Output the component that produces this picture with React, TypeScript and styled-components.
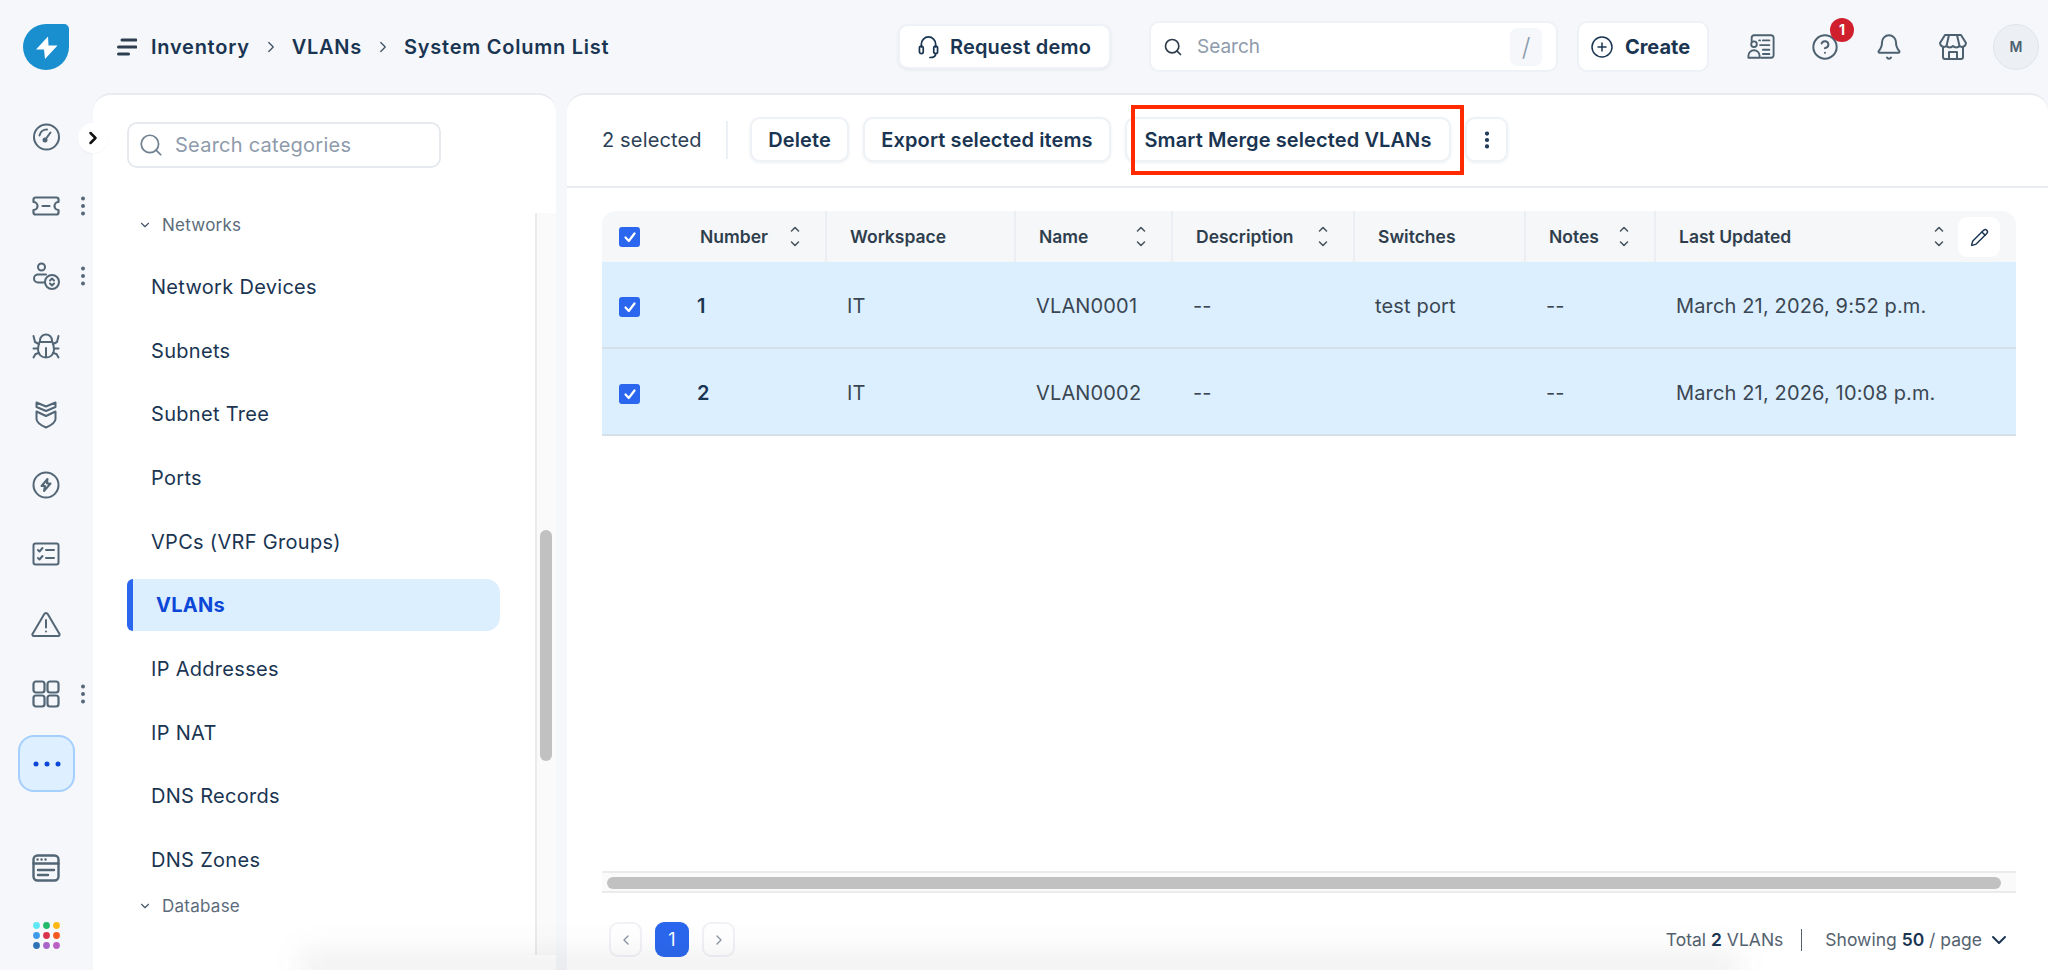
import React from "react";
import styled, { createGlobalStyle } from "styled-components";
import { ChevronDown, ChevronLeft, ChevronRight, CirclePlus, Pencil, Search, Bell, CircleHelp, EllipsisVertical } from "lucide-react";

const Global = createGlobalStyle`
  html, body { margin: 0; padding: 0; height: 100%; background: #f5f7fa; }
  body { font-family: Inter, "Liberation Sans", sans-serif; color: #1a3552; overflow: hidden; }
  * { box-sizing: border-box; }
`;

const Page = styled.div`
  position: relative; width: 2048px; height: 970px; display: flex; flex-direction: column; overflow: hidden; background: #f5f7fa;
`;
const TopBar = styled.header`
  height: 93px; flex: none; display: flex; align-items: center; padding: 0 9px 0 23px;
`;
const Logo = styled.svg` width: 46px; height: 46px; flex: none; `;
const MenuIcon = styled.svg` width: 20px; height: 18px; margin-left: 48px; flex: none; `;
const Crumbs = styled.nav`
  display: flex; align-items: center; margin-left: 14px; font-size: 20px; font-weight: 600; letter-spacing: 0.75px; color: #1a3552;
  svg { margin: 0 12px; color: #3b4d60; }
`;
const TopRight = styled.div` margin-left: auto; display: flex; align-items: center; `;
const DemoButton = styled.button`
  width: 213px; height: 45px; border: 2px solid #eef1f5; border-radius: 10px; background: #fff; display: flex; align-items: center; justify-content: center; gap: 11px;
  font: 600 20px Inter, sans-serif; color: #1a3552; box-shadow: 0 1px 3px rgba(30,50,80,.08); letter-spacing: .2px;
`;
const SearchBox = styled.div`
  width: 409px; height: 51px; margin-left: 38px; border: 2px solid #eef1f5; border-radius: 10px; background: #fff; display: flex; align-items: center; padding: 0 14px 0 12px;
  font-size: 19px; color: #8e9bab; gap: 14px;
`;
const Slash = styled.span`
  margin-left: auto; width: 32px; height: 38px; border-radius: 7px; background: #f5f7fa; display: flex; align-items: center; justify-content: center; color: #8a9aac; font-size: 25px; font-weight: 300;
`;
const CreateButton = styled.button`
  width: 132px; height: 51px; margin-left: 19px; border: 2px solid #eef1f5; border-radius: 10px; background: #fff; display: flex; align-items: center; justify-content: center; gap: 11px; padding: 0 6px 0 0;
  font: 700 20px Inter, sans-serif; color: #1a3552;
`;
const TopIcons = styled.div` display: flex; align-items: center; gap: 36px; margin-left: 38px; `;
const TopIcon = styled.div` position: relative; width: 28px; height: 28px; display: flex; align-items: center; justify-content: center; color: #4c6070; `;
const Badge = styled.span`
  position: absolute; top: -15px; right: -15px; width: 24px; height: 24px; border-radius: 50%; background: #d0202e; color: #fff; font-size: 14px; font-weight: 700; display: flex; align-items: center; justify-content: center;
`;
const Avatar = styled.div`
  width: 46px; height: 46px; margin-left: 26px; border-radius: 50%; background: #eceff3; border: 1px solid #e1e5ea; color: #4c6070; font-size: 14px; font-weight: 600; display: flex; align-items: center; justify-content: center;
`;

const Body = styled.div` position: relative; flex: 1; display: flex; min-height: 0; `;
const Rail = styled.aside` width: 93px; flex: none; display: flex; flex-direction: column; padding-top: 9px; `;
const RailItem = styled.div`
  height: 69.6px; flex: none; display: flex; align-items: center; padding-left: 30px; color: #536676;
`;
const RailGlyph = styled.div` width: 32px; height: 32px; display: flex; align-items: center; justify-content: center; `;
const Kebab = styled.svg` width: 4px; height: 20px; margin-left: 19px; `;
const MoreTile = styled.div`
  width: 57px; height: 57px; margin: 7px 0 0 18px; border: 2px solid #a5cfff; border-radius: 16px; background: #deefff; display: flex; align-items: center; justify-content: center; flex: none;
`;
const RailBottom = styled(RailItem)` height: 32px; `;
const RailSpacer = styled.div` height: 60px; flex: none; `;
const RailGap = styled.div` height: 35px; flex: none; `;
const ExpandButton = styled.button`
  position: absolute; left: 78px; top: 30px; width: 30px; height: 30px; border-radius: 50%; border: 0; padding: 0; background: #fff; color: #111; display: flex; align-items: center; justify-content: center; box-shadow: 0 1px 2px rgba(0,0,0,.04);
`;

const CategoryPanel = styled.section`
  width: 463px; flex: none; background: #fff; border-top: 2px solid #e8ebf0; border-top-left-radius: 18px; border-top-right-radius: 18px; display: flex; flex-direction: column;
`;
const CatHead = styled.div` height: 118px; flex: none; padding: 27px 0 0 34px; `;
const CatSearch = styled.div`
  width: 314px; height: 46px; border: 2px solid #e6eaef; border-radius: 10px; display: flex; align-items: center; gap: 11px; padding-left: 9px; color: #8e9bab; font-size: 20px; letter-spacing: .25px;
  svg { color: #6e7f90; }
`;
const CatBody = styled.div` height: 742px; display: flex; `;
const CatList = styled.div` width: 442px; flex: none; padding: 0 35px 0 34px; overflow: hidden; display: flex; flex-direction: column; gap: 11.7px; `;
const CatTrack = styled.div` width: 21px; border-left: 2px solid #ebebeb; background: #fafafa; position: relative; `;
const CatThumb = styled.div` position: absolute; left: 3px; top: 317px; width: 12px; height: 231px; border-radius: 6px; background: #c1c1c1; `;
const SectionRow = styled.div<{ $before?: number; $after?: number }>`
  height: 24px; flex: none; margin-top: ${p => p.$before ?? 0}px; margin-bottom: ${p => p.$after ?? 0}px; display: flex; align-items: center; gap: 10px; padding-left: 11px; font-size: 17px; letter-spacing: .25px; color: #5b6b7b;
  svg { color: #44566a; }
`;
const CatItem = styled.div<{ $active?: boolean }>`
  height: 52px; flex: none; display: flex; align-items: center; font-size: 20px; letter-spacing: .3px;
  font-weight: ${p => (p.$active ? 700 : 400)};
  padding-left: ${p => (p.$active ? 23 : 24)}px;
  color: ${p => (p.$active ? "#0d47d8" : "#1a3552")};
  ${p => p.$active && "background:#dcefff;border-left:6px solid #2a67ee;border-radius:6px 14px 14px 6px;"}
`;

const MainPanel = styled.main`
  flex: 1; margin-left: 11px; background: #fff; border-top: 2px solid #e8ebf0; border-top-left-radius: 18px; border-top-right-radius: 18px; display: flex; flex-direction: column; min-width: 0;
`;
const ActionBar = styled.div`
  height: 93px; flex: none; border-bottom: 2px solid #e9edf2; display: flex; align-items: center; padding: 0 0 2px 35px;
`;
const Selected = styled.span` font-size: 20px; letter-spacing: .15px; color: #2c4056; width: 124px; `;
const BarDivider = styled.span` width: 2px; height: 38px; background: #eceff3; margin-right: 22px; `;
const ActionButton = styled.button<{ $w: number }>`
  width: ${p => p.$w}px; height: 45px; margin-right: 14px; flex: none; border: 2px solid #eef1f5; border-radius: 10px; background: #fff; color: #1a3552; font: 600 20px Inter, sans-serif; letter-spacing: .1px; box-shadow: 0 1px 3px rgba(30,50,80,.08); padding: 0; display: flex; align-items: center; justify-content: center;
`;
const Highlighted = styled.div` position: relative; flex: none; `;
const RedBox = styled.div`
  position: absolute; left: 6px; right: 1px; top: -12px; bottom: -13px; border: 4px solid #ff2a00; pointer-events: none;
`;
const TableWrap = styled.div` flex: 1; padding: 23px 32px 0 35px; min-height: 0; `;
const columns = "74px 150px 189px 157px 182px 171px 130px 361px";
const HeadRow = styled.div`
  position: relative; display: grid; grid-template-columns: ${columns}; height: 51px; background: #f5f7f9; border-radius: 14px 14px 0 0;
`;
const HeadCell = styled.div<{ $last?: boolean; $plain?: boolean }>`
  display: flex; align-items: center; padding: 0 ${p => (p.$last ? 72 : 26)}px 0 ${p => (p.$plain ? 25 : 23)}px; font-size: 17.5px; font-weight: 600; color: #2f3e4d; margin-left: -1px;
  border-left: ${p => (p.$plain ? "0" : "2px solid #ebeef2")};
`;
const CheckCell = styled.div` display: flex; align-items: center; padding-left: 17px; `;
const RowCheckCell = styled(CheckCell)` padding-top: 3px; `;
const Check = styled.span`
  width: 21px; height: 20px; border-radius: 3px; background: #2a67ee; display: flex; align-items: center; justify-content: center; color: #fff;
`;
const SortGlyph = styled.svg` width: 10px; height: 21px; margin-left: auto; color: #44525f; flex: none; `;
const EditButton = styled.button`
  position: absolute; left: 1356px; top: 6px; width: 42px; height: 40px; border: 0; padding: 0; border-radius: 9px; background: #fff; color: #1a3552; display: flex; align-items: center; justify-content: center;
`;
const Row = styled.div`
  display: grid; grid-template-columns: ${columns}; height: 87px; background: #dcefff; border-bottom: 2px solid #d6e0e9; padding-top: 2px;
`;
const Cell = styled.div<{ $strong?: boolean }>`
  display: flex; align-items: center; padding-left: 21px; font-size: 20px; letter-spacing: .15px; color: ${p => (p.$strong ? "#1a3552" : "#3a4652")};
  font-weight: ${p => (p.$strong ? 600 : 400)};
`;
const HScroll = styled.div`
  height: 22px; flex: none; margin: 0 32px 0 35px; border-top: 2px solid #ebebeb; border-bottom: 2px solid #ebebeb; background: #fafafa; padding: 4px 15px 0 5px;
`;
const HThumb = styled.div` height: 12px; border-radius: 6px; background: #c1c1c1; `;
const Footer = styled.div`
  height: 77px; flex: none; padding: 29px 37px 0 42px; display: flex; align-items: flex-start;
`;
const PageBtn = styled.div<{ $on?: boolean }>`
  width: ${p => (p.$on ? 34 : 33)}px; height: 35px; margin-right: 13px; border-radius: 9px; border: ${p => (p.$on ? "0" : "2px solid #f0f2f5")}; background: ${p => (p.$on ? "#2a67ee" : "#fff")}; color: ${p => (p.$on ? "#fff" : "#8a96a3")}; font-size: 18px; display: flex; align-items: center; justify-content: center;
`;
const Summary = styled.div`
  margin-left: auto; height: 35px; display: flex; align-items: center; font-size: 17.5px; color: #54626f;
  b { color: #1a3552; font-weight: 600; }
`;
const SumDivider = styled.span` width: 1px; height: 22px; background: #55626f; margin: 0 23px 0 18px; `;
const SumChevron = styled.span` display: flex; margin-left: 5px; color: #1a3552; `;
const BottomGlow = styled.div`
  position: absolute; left: 300px; width: 1440px; bottom: -14px; height: 34px; background: rgba(60,60,60,.07); filter: blur(14px); pointer-events: none;
`;

const Ico: React.FC<{ w: number; h: number; vw?: number; vh?: number; sw?: number; children: React.ReactNode }> = ({ w, h, vw, vh, sw = 2, children }) => (
  <svg width={w} height={h} viewBox={`0 0 ${vw ?? w} ${vh ?? h}`} fill="none" stroke="currentColor" strokeWidth={sw} strokeLinecap="round" strokeLinejoin="round">{children}</svg>
);

const KebabDots = () => (
  <Kebab viewBox="0 0 4 20"><g fill="#55687a"><circle cx="2" cy="2.5" r="2" /><circle cx="2" cy="10" r="2" /><circle cx="2" cy="17.5" r="2" /></g></Kebab>
);
const Sort = () => (
  <SortGlyph viewBox="0 0 10 21" fill="none" stroke="currentColor" strokeWidth="1.5" strokeLinecap="round" strokeLinejoin="round">
    <path d="M1.5 5 5 1.5 8.5 5" /><path d="M1.5 16 5 19.5 8.5 16" />
  </SortGlyph>
);
const Tick = () => (
  <svg width="14" height="14" viewBox="0 0 14 14" fill="none" stroke="currentColor" strokeWidth="2.2" strokeLinecap="round" strokeLinejoin="round"><path d="M2.5 7.5 5.8 11 11.5 3.5" /></svg>
);

const colors = ["#5ee8f5", "#23b96b", "#fdb813", "#3d9be9", "#d9324a", "#f4581f", "#2d73b5", "#a765c9", "#bb61c6"];
const cats = ["Network Devices", "Subnets", "Subnet Tree", "Ports", "VPCs (VRF Groups)", "VLANs", "IP Addresses", "IP NAT", "DNS Records", "DNS Zones"];
const rows = [
  ["1", "IT", "VLAN0001", "--", "test port", "--", "March 21, 2026, 9:52 p.m."],
  ["2", "IT", "VLAN0002", "--", "", "--", "March 21, 2026, 10:08 p.m."],
];

export default function App() {
  return (
    <Page>
      <Global />
      <TopBar>
        <Logo viewBox="0 0 46 46">
          <path d="M25 0H41a5 5 0 0 1 5 5V23A23 23 0 1 1 23 0z" fill="#1a8fd0" />
          <path d="M25 12.500 13 25.500H21L22 35 34.500 21.500H25.500z" fill="#fff" />
        </Logo>
        <MenuIcon viewBox="0 0 20 18" fill="none" stroke="#2c3e50" strokeWidth="3" strokeLinecap="round">
          <path d="M5 2h14M1.500 9h17.500M1.500 16h10" />
        </MenuIcon>
        <Crumbs>
          <span>Inventory</span>
          <ChevronRight size={18} strokeWidth={1.6} />
          <span>VLANs</span>
          <ChevronRight size={18} strokeWidth={1.6} />
          <span>System Column List</span>
        </Crumbs>
        <TopRight>
          <DemoButton>
            <Ico w={21} h={26} vw={22} vh={26} sw={1.8}>
              <path d="M3.500 13V10a7.500 7.500 0 0 1 15 0v3" /><rect x="1.500" y="12" width="4" height="8" rx="2" /><rect x="16.500" y="12" width="4" height="8" rx="2" /><path d="M18.500 20c0 2.500-2.500 4-6 4" />
            </Ico>
            Request demo
          </DemoButton>
          <SearchBox>
            <Search size={20} color="#2f3e4d" strokeWidth={2} />
            Search
            <Slash>/</Slash>
          </SearchBox>
          <CreateButton>
            <CirclePlus size={24} strokeWidth={1.5} />
            Create
          </CreateButton>
          <TopIcons>
            <TopIcon>
              <Ico w={30} h={27} sw={2}>
                <path d="M5 8V4a2.500 2.500 0 0 1 2.500-2.500H26A2.500 2.500 0 0 1 28.500 4V23a2.500 2.500 0 0 1-2.500 2.500H15" />
                <circle cx="7.500" cy="11" r="3" /><path d="M1.500 25.500v-2a6 6 0 0 1 12 0v2z" />
                <path d="M13 7h1M17 7h7M14 12h10M17 17h7M17 21.500h7" />
              </Ico>
            </TopIcon>
            <TopIcon>
              <CircleHelp size={30} strokeWidth={1.7} />
              <Badge>1</Badge>
            </TopIcon>
            <TopIcon><Bell size={28} strokeWidth={1.7} /></TopIcon>
            <TopIcon>
              <Ico w={28} h={27} sw={2}>
                <path d="M6 2h16l5 8a4 4 0 0 1-6.500 3 4.500 4.500 0 0 1-6.500 0 4.500 4.500 0 0 1-6.500 0A4 4 0 0 1 1 10z" />
                <path d="M10 2 7.500 13M18 2l2.500 11" /><path d="M4 14v10a2 2 0 0 0 2 2h16a2 2 0 0 0 2-2V14" /><path d="M10 26v-7h8v7" />
              </Ico>
            </TopIcon>
          </TopIcons>
          <Avatar>M</Avatar>
        </TopRight>
      </TopBar>

      <Body>
        <Rail>
          <RailItem><RailGlyph>
            <Ico w={27} h={28} sw={2}>
              <circle cx="13.500" cy="14" r="12.500" /><path d="M6.500 12.500A7.500 7.500 0 0 1 14 6.500" /><path d="M12 17 17.500 9.500" /><circle cx="12" cy="17" r="1.500" fill="currentColor" />
            </Ico>
          </RailGlyph></RailItem>
          <RailItem><RailGlyph>
            <Ico w={28} h={20} sw={2.2}>
              <path d="M3.500 1.500h21a2 2 0 0 1 2 2V6a4 4 0 0 0 0 8v2.500a2 2 0 0 1-2 2h-21a2 2 0 0 1-2-2V14a4 4 0 0 0 0-8V3.500a2 2 0 0 1 2-2z" /><path d="M10.500 10h7" />
            </Ico>
          </RailGlyph><KebabDots /></RailItem>
          <RailItem><RailGlyph>
            <Ico w={28} h={28} sw={2}>
              <circle cx="9.500" cy="5" r="3.500" /><path d="M14 12.500H6a4 4 0 0 0 0 8h7" /><circle cx="20" cy="20" r="7" />
              <path d="M18 18.500 20 16.500l2 2M18 21.500l2 2 2-2" />
            </Ico>
          </RailGlyph><KebabDots /></RailItem>
          <RailItem><RailGlyph>
            <Ico w={28} h={26} sw={2}>
              <path d="M8 9V7.500a6 6 0 0 1 12 0V9" /><path d="M7.500 9h13c1 3 1.500 5 1.500 7.500 0 5-3.500 8-8 8s-8-3-8-8C6 14 6.500 12 7.500 9z" /><path d="M14 15v9" />
              <path d="M7 11 3 9 1.500 3M21 11l4-2 1.500-6M6 15.500H1.500M22 15.500h4.500M7 20l-3.500 1-2 3.500M21 20l3.500 1 2 3.500" />
            </Ico>
          </RailGlyph></RailItem>
          <RailItem><RailGlyph>
            <Ico w={22} h={28} sw={2}>
              <path d="M1.500 1.500 11 5.500l9.500-4V6L11 10 1.500 6z" /><path d="M1.500 10.500 11 15l9.500-4.500v7.500c0 4-5 6.500-9.500 8.500C6.500 24.500 1.500 22 1.500 18z" />
            </Ico>
          </RailGlyph></RailItem>
          <RailItem><RailGlyph>
            <Ico w={28} h={28} sw={2}>
              <circle cx="14" cy="14" r="12.500" /><path d="M15.500 8 9.500 15H13l-1 5 6.500-7.500H15z" />
            </Ico>
          </RailGlyph></RailItem>
          <RailItem><RailGlyph>
            <Ico w={28} h={24} sw={2}>
              <rect x="1.500" y="1.500" width="25" height="21" rx="2" /><path d="M6 8l1.500 1.500L10.500 6M6 16l1.500 1.500L10.500 14M14 8h8M14 16h8" />
            </Ico>
          </RailGlyph></RailItem>
          <RailItem><RailGlyph>
            <Ico w={30} h={26} sw={2}>
              <path d="M15 2a2 2 0 0 1 1.700 1l11.500 19.500a1.500 1.500 0 0 1-1.300 2.500H3.100a1.500 1.500 0 0 1-1.300-2.500L13.300 3A2 2 0 0 1 15 2z" /><path d="M15 9v7.500M15 20.500v.1" />
            </Ico>
          </RailGlyph></RailItem>
          <RailItem><RailGlyph>
            <Ico w={28} h={28} sw={2.2}>
              <rect x="1.500" y="1.500" width="11" height="11" rx="2.500" /><rect x="15.500" y="1.500" width="11" height="11" rx="2.500" /><rect x="1.500" y="15.500" width="11" height="11" rx="2.500" /><rect x="15.500" y="15.500" width="11" height="11" rx="2.500" />
            </Ico>
          </RailGlyph><KebabDots /></RailItem>
          <MoreTile>
            <svg width="28" height="6" viewBox="0 0 28 6"><g fill="#0d47d8"><circle cx="3" cy="3" r="2.500" /><circle cx="14" cy="3" r="2.500" /><circle cx="25" cy="3" r="2.500" /></g></svg>
          </MoreTile>
          <RailSpacer />
          <RailBottom><RailGlyph>
            <Ico w={28} h={28} sw={2.4}>
              <rect x="1.500" y="1.500" width="25" height="25" rx="4" /><path d="M1.500 9.500h25M6 16h16M6 21h10" /><path d="M5.500 5.500h.1M9.500 5.500h.1M13.500 5.500h.1" />
            </Ico>
          </RailGlyph></RailBottom>
          <RailGap />
          <RailBottom><RailGlyph>
            <svg width="27" height="27" viewBox="0 0 27 27">
              {colors.map((c, i) => <circle key={c} cx={3.500 + (i % 3) * 10} cy={3.500 + Math.floor(i / 3) * 10} r="3.400" fill={c} />)}
            </svg>
          </RailGlyph></RailBottom>
        </Rail>

        <ExpandButton><ChevronRight size={20} strokeWidth={3} /></ExpandButton>

        <CategoryPanel>
          <CatHead>
            <CatSearch>
              <Search size={26} strokeWidth={1.6} />
              Search categories
            </CatSearch>
          </CatHead>
          <CatBody>
            <CatList>
              <SectionRow $after={12.2}><ChevronDown size={14} strokeWidth={2} />Networks</SectionRow>
              {cats.map(c => <CatItem key={c} $active={c === "VLANs"}>{c}</CatItem>)}
              <SectionRow $before={-3.7}><ChevronDown size={14} strokeWidth={2} />Database</SectionRow>
            </CatList>
            <CatTrack><CatThumb /></CatTrack>
          </CatBody>
        </CategoryPanel>

        <MainPanel>
          <ActionBar>
            <Selected>2 selected</Selected>
            <BarDivider />
            <ActionButton $w={99}>Delete</ActionButton>
            <ActionButton $w={248}>Export selected items</ActionButton>
            <Highlighted>
              <ActionButton $w={326}>Smart Merge selected VLANs</ActionButton>
              <RedBox />
            </Highlighted>
            <ActionButton $w={43}><EllipsisVertical size={22} strokeWidth={2.6} /></ActionButton>
          </ActionBar>
          <TableWrap>
            <HeadRow>
              <CheckCell><Check><Tick /></Check></CheckCell>
              <HeadCell $plain>Number<Sort /></HeadCell>
              <HeadCell>Workspace</HeadCell>
              <HeadCell>Name<Sort /></HeadCell>
              <HeadCell>Description<Sort /></HeadCell>
              <HeadCell>Switches</HeadCell>
              <HeadCell>Notes<Sort /></HeadCell>
              <HeadCell $last>Last Updated<Sort /></HeadCell>
              <EditButton><Pencil size={19} strokeWidth={1.8} /></EditButton>
            </HeadRow>
            {rows.map(r => (
              <Row key={r[0]}>
                <RowCheckCell><Check><Tick /></Check></RowCheckCell>
                {r.map((v, i) => <Cell key={i} $strong={i === 0}>{v}</Cell>)}
              </Row>
            ))}
          </TableWrap>
          <HScroll><HThumb /></HScroll>
          <Footer>
            <PageBtn><ChevronLeft size={16} /></PageBtn>
            <PageBtn $on>1</PageBtn>
            <PageBtn><ChevronRight size={16} /></PageBtn>
            <Summary>
              <span>Total <b>2</b> VLANs</span>
              <SumDivider />
              <span>Showing <b>50</b> / page</span>
              <SumChevron><ChevronDown size={24} strokeWidth={2} /></SumChevron>
            </Summary>
          </Footer>
        </MainPanel>
        <BottomGlow />
      </Body>
    </Page>
  );
}
